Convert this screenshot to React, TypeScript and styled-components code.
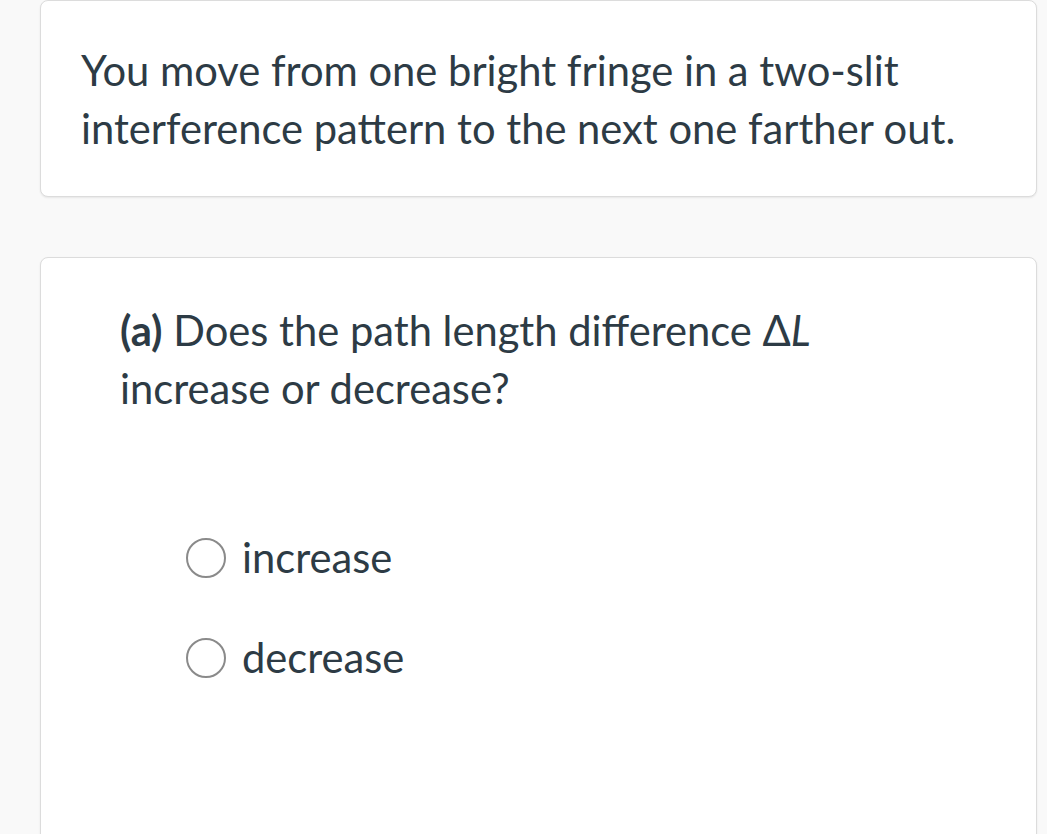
import React from 'react';
import styled, { createGlobalStyle } from 'styled-components';

const GlobalStyle = createGlobalStyle`
  html, body {
    margin: 0;
    padding: 0;
    background: #f9f9f9;
  }
  body {
    font-family: 'Lato', 'Liberation Sans', sans-serif;
    color: #2d3b45;
  }
`;

const Page = styled.div`
  padding: 0 10px 0 40px;
  display: flex;
  flex-direction: column;
  gap: 60px;
  height: 834px;
  overflow: hidden;
`;

const Card = styled.div<{ $pad: string; $tall?: boolean }>`
  background: #ffffff;
  border: 1px solid #dcdcdc;
  border-radius: 8px;
  box-shadow: 0 1px 2px rgba(0, 0, 0, 0.08);
  padding: ${(p) => p.$pad};
  flex: 0 0 auto;
  min-height: ${(p) => (p.$tall ? '700px' : 'auto')};
`;

const Text = styled.p`
  margin: 0;
  font-size: 41.7px;
  line-height: 58px;
  font-weight: 400;
`;

const Options = styled.div`
  display: flex;
  flex-direction: column;
  gap: 42px;
  padding: 111px 0 0 66px;
`;

const Option = styled.label`
  display: flex;
  align-items: center;
  gap: 16px;
  font-size: 41.7px;
  line-height: 58px;
`;

const Radio = styled.span`
  width: 36px;
  height: 36px;
  border: 2px solid #8a8a8a;
  border-radius: 50%;
  box-sizing: content-box;
  flex: 0 0 auto;
  margin-top: 2px;
`;

export default function App() {
  return (
    <>
      <GlobalStyle />
      <Page>
        <Card $pad="40px 40px 39px 40px">
          <Text>
            You move from one bright fringe in a two-slit interference pattern to the next one farther out.
          </Text>
        </Card>
        <Card $pad="43px 80px 0 79px" $tall>
          <Text>
            <b>(a)</b> Does the path length difference Δ<i>L</i>
            <br />
            increase or decrease?
          </Text>
          <Options>
            <Option>
              <Radio />
              increase
            </Option>
            <Option>
              <Radio />
              decrease
            </Option>
          </Options>
        </Card>
      </Page>
    </>
  );
}
